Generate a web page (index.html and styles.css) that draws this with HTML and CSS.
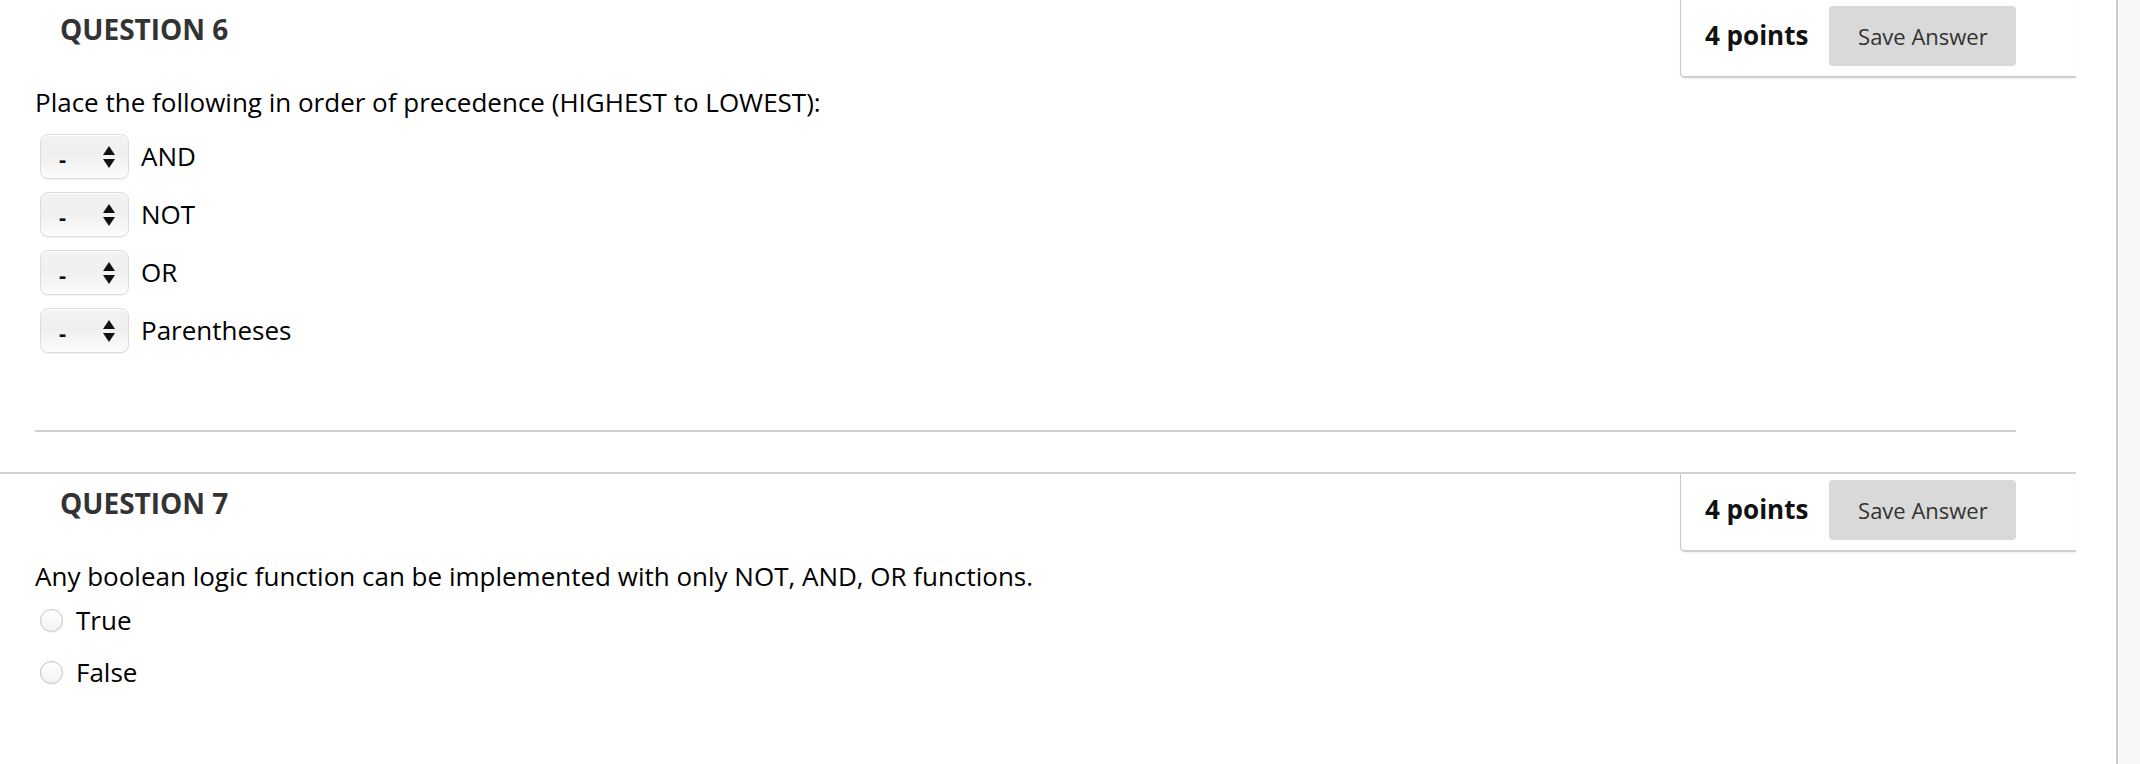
FILE: index.html
```html
<!DOCTYPE html>
<html lang="en">
<head>
<meta charset="utf-8">
<title>Questions</title>
<link rel="stylesheet" href="styles.css">
</head>
<body>
<div class="page">
  <main class="main">
    <ul class="questions">
      <li class="question">
        <div class="qhead">
          <h3 class="qtitle">QUESTION 6</h3>
          <div class="qpanel">
            <span class="points">4 points</span>
            <button class="save" type="button">Save Answer</button>
          </div>
        </div>
        <div class="qbody">
          <p class="qtext">Place the following in order of precedence (HIGHEST to LOWEST):</p>
          <ul class="order">
            <li class="order-row">
              <span class="sel"><span class="sel-val">-</span><svg class="sel-arrows" width="12" height="22" viewBox="0 0 12 22"><polygon points="6,0 12,9 0,9" fill="#111"/><polygon points="0,13 12,13 6,22" fill="#111"/></svg></span>
              <span class="opt">AND</span>
            </li>
            <li class="order-row">
              <span class="sel"><span class="sel-val">-</span><svg class="sel-arrows" width="12" height="22" viewBox="0 0 12 22"><polygon points="6,0 12,9 0,9" fill="#111"/><polygon points="0,13 12,13 6,22" fill="#111"/></svg></span>
              <span class="opt">NOT</span>
            </li>
            <li class="order-row">
              <span class="sel"><span class="sel-val">-</span><svg class="sel-arrows" width="12" height="22" viewBox="0 0 12 22"><polygon points="6,0 12,9 0,9" fill="#111"/><polygon points="0,13 12,13 6,22" fill="#111"/></svg></span>
              <span class="opt">OR</span>
            </li>
            <li class="order-row">
              <span class="sel"><span class="sel-val">-</span><svg class="sel-arrows" width="12" height="22" viewBox="0 0 12 22"><polygon points="6,0 12,9 0,9" fill="#111"/><polygon points="0,13 12,13 6,22" fill="#111"/></svg></span>
              <span class="opt">Parentheses</span>
            </li>
          </ul>
          <hr class="qsep">
        </div>
      </li>
      <li class="question question-next">
        <div class="qhead">
          <h3 class="qtitle">QUESTION 7</h3>
          <div class="qpanel">
            <span class="points">4 points</span>
            <button class="save" type="button">Save Answer</button>
          </div>
        </div>
        <div class="qbody">
          <p class="qtext">Any boolean logic function can be implemented with only NOT, AND, OR functions.</p>
          <ul class="choices">
            <li class="choice"><span class="radio"></span><span class="opt">True</span></li>
            <li class="choice"><span class="radio"></span><span class="opt">False</span></li>
          </ul>
        </div>
      </li>
    </ul>
  </main>
  <div class="rail"></div>
</div>
</body>
</html>
```

FILE: styles.css
```css
* { box-sizing: border-box; }
html, body { margin: 0; padding: 0; }
body {
  background: #ffffff;
  font-family: "Open Sans", "Liberation Sans", sans-serif;
  color: #000;
  height: 764px;
  overflow: hidden;
}
.page {
  display: flex;
  height: 764px;
}
.main {
  width: 2116px;
  flex: none;
}
.rail {
  flex: 1;
  border-left: 2px solid #cacaca;
  background: #f7f7f7;
}
.questions {
  list-style: none;
  margin: 0;
  padding: 0;
  width: 2076px;
}
.question-next {
  margin-top: 40px;
  border-top: 2px solid #d2d2d2;
}
.qhead {
  display: flex;
  justify-content: space-between;
  align-items: flex-start;
}
.qtitle {
  margin: 0;
  padding: 11px 0 0 60px;
  font-size: 28px;
  line-height: 37px;
  font-weight: 700;
  color: #333;
}
.qpanel {
  width: 396px;
  height: 78px;
  display: flex;
  align-items: flex-start;
  padding: 6px 0 0 24px;
  border-left: 1px solid #c8c8c8;
  border-bottom: 2px solid #cfcfcf;
  border-bottom-left-radius: 5px;
  box-shadow: 0 1px 2px rgba(0, 0, 0, 0.06);
  background: #fff;
}
.points {
  font-size: 26px;
  font-weight: 700;
  line-height: 58px;
  color: #111;
}
.save {
  margin-left: 21px;
  width: 187px;
  height: 60px;
  border: none;
  border-radius: 4px;
  background: #d9d9d9;
  color: #333;
  font-family: "Open Sans", "Liberation Sans", sans-serif;
  font-size: 22px;
  padding: 0;
}
.qbody {
  padding-left: 35px;
}
.qtext {
  margin: 7px 0 0 0;
  font-size: 26px;
  line-height: 34px;
  color: #000;
}
.order {
  list-style: none;
  margin: 8px 0 0 0;
  padding: 0 0 0 5px;
}
.order-row {
  height: 58px;
  display: flex;
  align-items: center;
}
.sel {
  width: 89px;
  height: 45px;
  display: flex;
  align-items: center;
  justify-content: space-between;
  padding: 0 13px 0 18px;
  border: 1px solid #dcdcdc;
  border-radius: 8px;
  background: linear-gradient(#f3f3f3 0%, #efefef 48%, #f1f1f1 52%, #f7f7f7 80%, #fdfdfd 100%);
  box-shadow: inset 0 1px 0 #fff, 0 1px 1px rgba(0, 0, 0, 0.05);
}
.sel-val {
  font-size: 22px;
  line-height: 1;
  font-weight: 700;
  color: #111;
  padding-top: 4px;
}
.sel-arrows { display: block; margin-top: 1px; }
.opt {
  margin-left: 12px;
  font-size: 26px;
  line-height: 34px;
  color: #000;
}
.qsep {
  margin: 71px 0 0 0;
  width: 1981px;
  height: 2px;
  border: none;
  background: #cfcfcf;
}
.choices {
  list-style: none;
  margin: 1px 0 0 0;
  padding: 0 0 0 5px;
}
.choice {
  height: 52px;
  display: flex;
  align-items: center;
}
.radio {
  width: 23px;
  height: 23px;
  border-radius: 50%;
  border: 1px solid #c2c2c2;
  background: linear-gradient(#ffffff, #f3f3f3);
  box-shadow: 0 1px 1px rgba(0, 0, 0, 0.05);
  flex: none;
}
.choice .opt { margin-left: 13px; }
```
